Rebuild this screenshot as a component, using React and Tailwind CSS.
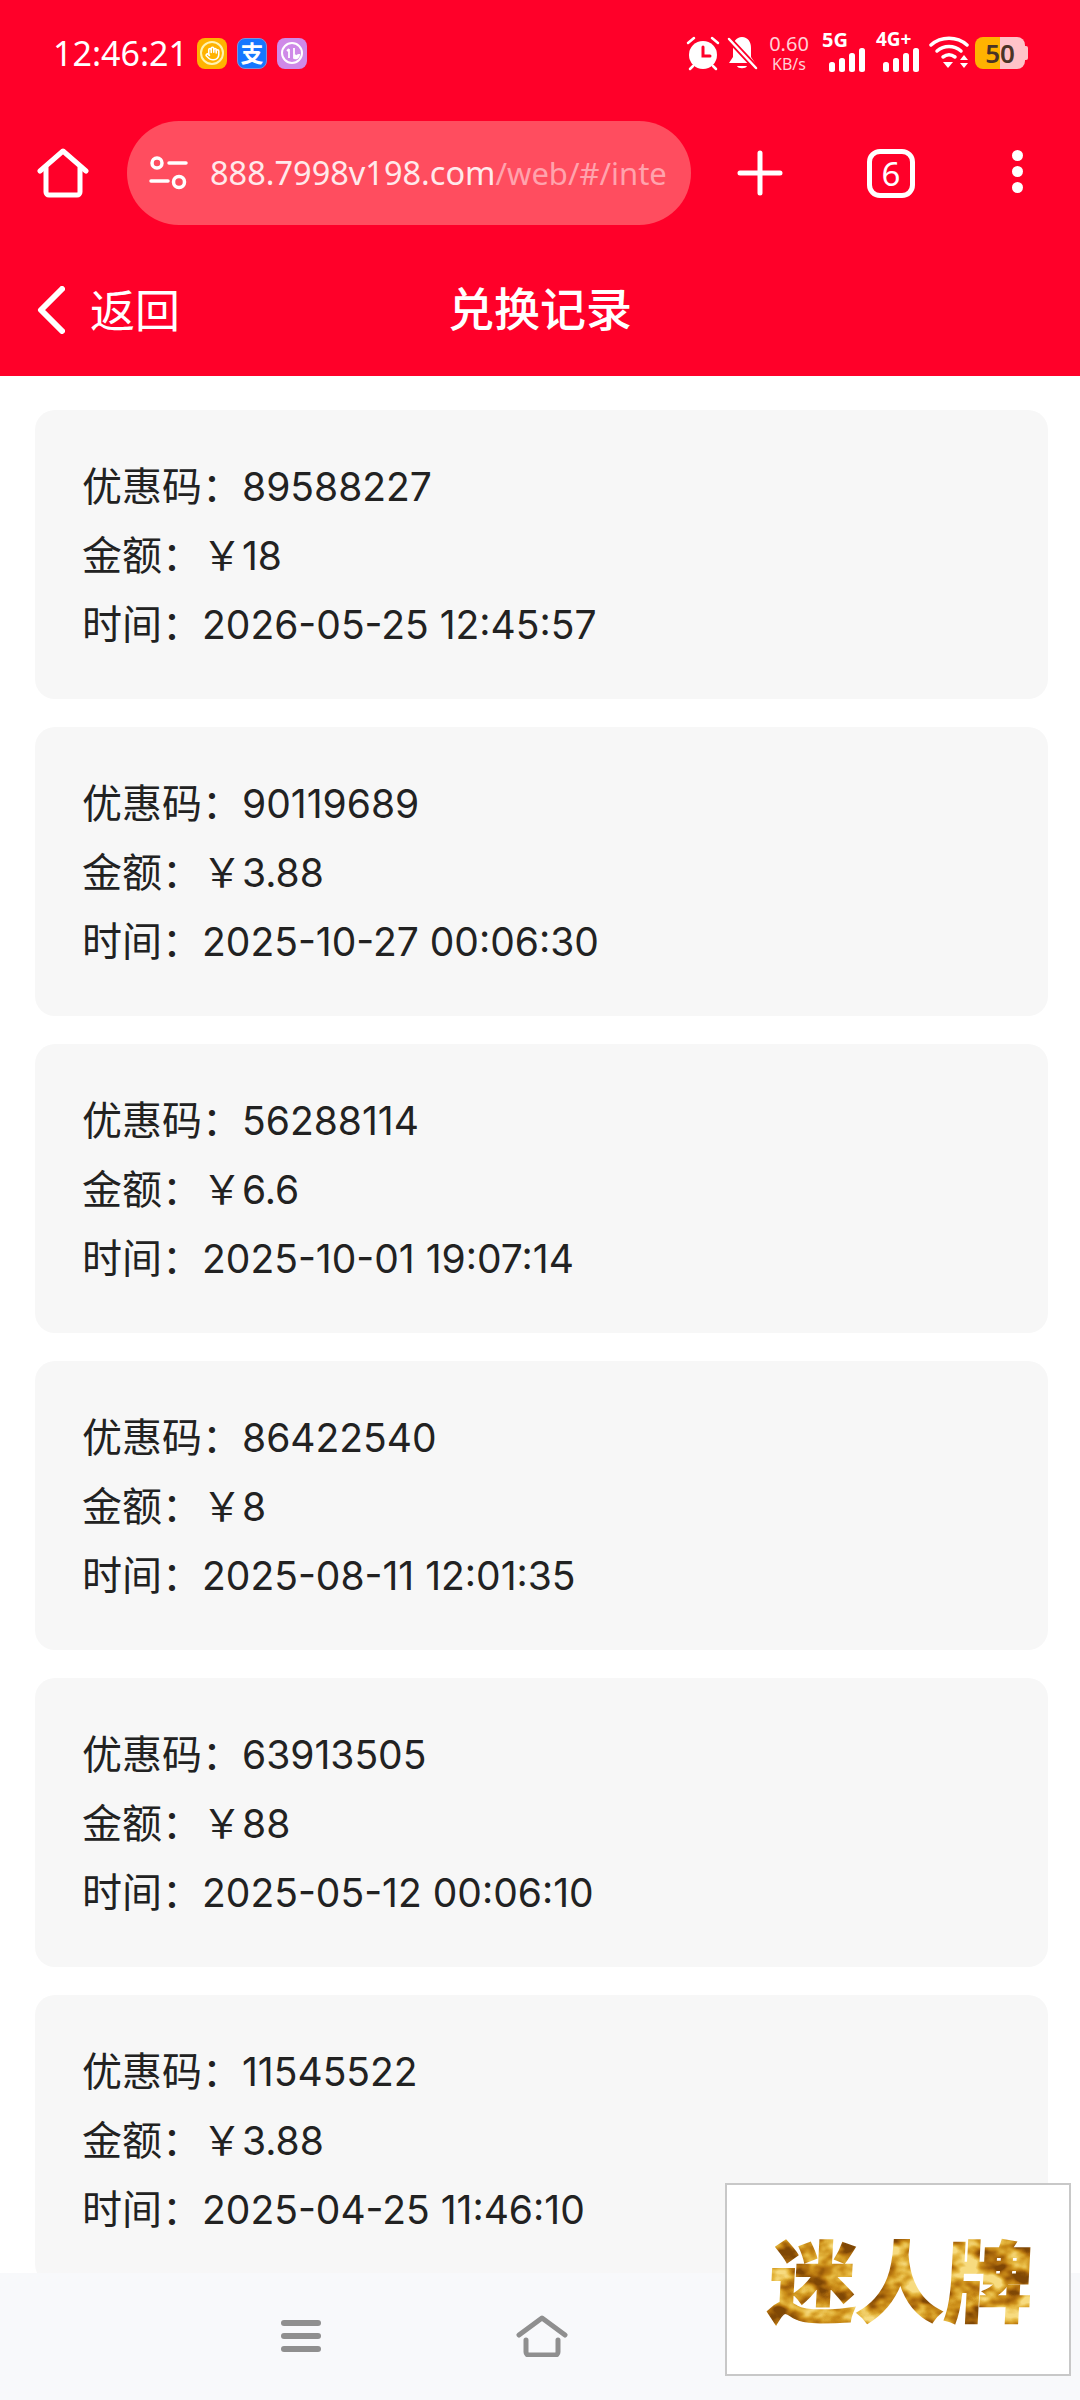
import React from "react";
import { Hand } from "lucide-react";

const records = [
  { code: "89588227", amount: "18", time: "2026-05-25 12:45:57" },
  { code: "90119689", amount: "3.88", time: "2025-10-27 00:06:30" },
  { code: "56288114", amount: "6.6", time: "2025-10-01 19:07:14" },
  { code: "86422540", amount: "8", time: "2025-08-11 12:01:35" },
  { code: "63913505", amount: "88", time: "2025-05-12 00:06:10" },
  { code: "11545522", amount: "3.88", time: "2025-04-25 11:46:10" },
];

const Signal = () => (
  <svg width="40" height="24" viewBox="0 0 40 24" fill="white">
    <rect x="2" y="14" width="6" height="10" rx="2.5" />
    <rect x="12" y="10" width="6" height="14" rx="2.5" />
    <rect x="22" y="5" width="6" height="19" rx="2.5" />
    <rect x="32" y="0" width="6" height="24" rx="2.5" />
  </svg>
);

const StatusBar = () => (
  <div className="h-[106px] flex items-center pl-[53px] pr-[52px]">
    <span className="text-[34px] leading-none text-white w-[144px] whitespace-nowrap">12:46:21</span>
    <div className="flex gap-[10px]">
      <div className="w-[30px] h-[31px] rounded-[8px] bg-[#ffb300] flex items-center justify-center">
        <div className="w-[24px] h-[24px] rounded-full border-2 border-[#fff3b0] flex items-center justify-center">
          <Hand size={15} color="#ffffff" strokeWidth={2.5} />
        </div>
      </div>
      <div className="w-[30px] h-[31px] rounded-[8px] bg-[#1677ff] border border-[#7f8fd8] flex items-center justify-center text-white text-[23px] leading-none font-bold">
        支
      </div>
      <div className="w-[30px] h-[31px] rounded-[8px] bg-[#cf8ae8] flex items-center justify-center">
        <svg width="24" height="24" viewBox="0 0 24 24" fill="none" stroke="white" strokeWidth="2">
          <circle cx="12" cy="12" r="10" />
          <path d="M9 8v9M7 10l2-2M14 7v9l2-2" strokeWidth="1.8" />
          <path d="M14 18c3 1 6-1 6-5-3 0-6 2-6 5z" fill="white" stroke="none" />
        </svg>
      </div>
    </div>
    <div className="ml-auto flex items-center">
      <svg width="36" height="36" viewBox="0 0 36 36" fill="white" stroke="white" strokeLinecap="round">
        <circle cx="18" cy="20" r="14" stroke="none" />
        <path d="M3 8l6-5M33 8l-6-5M8 31l-3 3M28 31l3 3" strokeWidth="2.5" fill="none" />
        <path d="M18 12v9h7" stroke="#ff0029" strokeWidth="3" fill="none" />
      </svg>
      <svg className="ml-[5px]" width="32" height="36" viewBox="0 0 32 36" fill="white" strokeLinecap="round">
        <path d="M16 2c6 0 9 5 9 11v9l4 6H3l4-6v-9C7 7 10 2 16 2z" />
        <path d="M11 31c1 3 9 3 10 0z" />
        <path d="M2 3l28 30" stroke="#ff0029" strokeWidth="6" />
        <path d="M3 4l27 29" stroke="white" strokeWidth="2.5" />
      </svg>
      <div className="ml-[9px] w-[44px] flex flex-col items-center text-[#ffd0d6] leading-none">
        <span className="text-[20px]">0.60</span>
        <span className="text-[16px] mt-[2px]">KB/s</span>
      </div>
      <div className="ml-[11px] w-[44px] relative h-[38px]">
        <span className="absolute left-0 top-[-4px] text-[20px] font-bold text-white leading-none">5G</span>
        <div className="absolute right-[-1px] bottom-0 flex"><Signal /></div>
      </div>
      <div className="ml-[10px] w-[44px] relative h-[38px]">
        <span className="absolute left-0 top-[-4px] text-[19px] font-bold text-white leading-none whitespace-nowrap">4G+</span>
        <div className="absolute right-[-1px] bottom-0 flex"><Signal /></div>
      </div>
      <svg className="ml-[9px]" width="40" height="34" viewBox="0 0 40 34" fill="none" stroke="white" strokeWidth="3.5" strokeLinecap="round">
        <path d="M2 9c10-9 26-9 36 0" />
        <path d="M8 15c7-6 17-6 24 0" />
        <path d="M14 21c4-3 8-3 12 0" />
        <path d="M14 26h10l-5 6z" fill="white" stroke="none" />
        <path d="M31 24l4-5 4 5zM31 27h8l-4 5z" fill="white" stroke="none" />
      </svg>
      <div className="ml-[6px] flex items-center">
        <div className="w-[50px] h-[32px] flex relative">
          <div className="w-[25px] bg-[#ffb300] rounded-l-[8px]" />
          <div className="w-[25px] bg-[#ffc2c8] rounded-r-[8px]" />
          <span className="absolute inset-0 flex items-center justify-center text-[26px] font-semibold leading-none text-[#4a3326]">50</span>
        </div>
        <div className="w-[3px] h-[14px] bg-[#ffc2c8] rounded-r-[2px]" />
      </div>
    </div>
  </div>
);

const BrowserBar = () => (
  <div className="h-[134px] flex items-center">
    <div className="w-[127px] flex justify-center pr-[2px]">
      <svg width="52" height="50" viewBox="0 0 52 50" fill="none" stroke="white" strokeWidth="5" strokeLinecap="round" strokeLinejoin="round">
        <path d="M3 23L26 3l23 20" />
        <path d="M9 20v24a3 3 0 0 0 3 3h28a3 3 0 0 0 3-3V20" />
      </svg>
    </div>
    <div className="w-[564px] h-[104px] rounded-full bg-[#ff4d5f] flex items-center pl-[21px] overflow-hidden">
      <svg width="40" height="34" viewBox="0 0 40 34" fill="none" stroke="white" strokeWidth="3.5" strokeLinecap="round">
        <circle cx="9" cy="7" r="5" />
        <path d="M21 7h17M3 25h17" />
        <circle cx="31" cy="26" r="5.5" />
      </svg>
      <span className="ml-[22px] text-[32.5px] leading-none whitespace-nowrap text-[#ffe9eb]">
        888.7998v198.com<span className="text-[31px] text-[#ffa3ad]">/web/#/inte</span>
      </span>
    </div>
    <div className="flex-1 relative h-full">
      <div className="absolute left-[46px] top-[44px]">
        <svg width="46" height="46" viewBox="0 0 46 46" stroke="white" strokeWidth="5" strokeLinecap="round">
          <path d="M23 3v40M3 23h40" />
        </svg>
      </div>
      <div className="absolute left-[176px] top-[43px] w-[48px] h-[49px] rounded-[13px] border-[5px] border-white flex items-center justify-center text-white text-[33px] leading-none">
        6
      </div>
      <div className="absolute left-[321px] top-[44px] flex flex-col gap-[5px]">
        <div className="w-[11px] h-[11px] rounded-full bg-white" />
        <div className="w-[11px] h-[11px] rounded-full bg-white" />
        <div className="w-[11px] h-[11px] rounded-full bg-white" />
      </div>
    </div>
  </div>
);

const TitleBar = () => (
  <div className="h-[136px] relative flex items-center justify-center pb-[1px] pl-[37px]">
    <div className="absolute left-[37px] top-[46px] flex items-center">
      <svg width="28" height="48" viewBox="0 0 28 48" fill="none" stroke="white" strokeWidth="6" strokeLinecap="round" strokeLinejoin="round">
        <path d="M25 3L4 24l21 21" />
      </svg>
      <span className="ml-[25px] text-[45px] leading-none text-white">返回</span>
    </div>
    <span className="text-[46px] leading-none font-medium text-white pr-[37px]">兑换记录</span>
  </div>
);

const Num = ({ children }) => (
  <span className="font-['Inter','Noto_Sans',sans-serif] text-[39px] leading-none">{children}</span>
);

const RecordCard = ({ code, amount, time }) => (
  <div className="shrink-0 rounded-[20px] bg-[#f7f7f7] pl-[47px] py-[41px] text-[40px] leading-[69px] text-[#222222]">
    <p>优惠码：<Num>{code}</Num></p>
    <p>金额：￥<Num>{amount}</Num></p>
    <p>时间：<Num>{time}</Num></p>
  </div>
);

const BottomNav = () => (
  <div className="h-[127px] shrink-0 bg-[#f8f9fb] flex items-center pl-[180px] pb-[2px]">
    <div className="w-[241px] flex justify-center">
      <div className="w-[40px] flex flex-col gap-[7px]">
        <div className="h-[6px] rounded-full bg-[#8f8f8f]" />
        <div className="h-[6px] rounded-full bg-[#8f8f8f]" />
        <div className="h-[6px] rounded-full bg-[#8f8f8f]" />
      </div>
    </div>
    <div className="w-[241px] flex justify-center">
      <svg width="52" height="42" viewBox="0 0 52 42" fill="none" stroke="#8f8f8f" strokeWidth="5" strokeLinecap="round" strokeLinejoin="round">
        <path d="M3 20L26 3l23 17" />
        <path d="M10 25v12a3 3 0 0 0 3 3h26a3 3 0 0 0 3-3V25" />
      </svg>
    </div>
  </div>
);

// gold logo: real text, marble texture comes from the filter
const GoldLogo = () => (
  <svg width="290" height="150" viewBox="0 0 290 150">
    <defs>
      <filter id="gold" x="0" y="0" width="100%" height="100%" colorInterpolationFilters="sRGB">
        <feTurbulence type="fractalNoise" baseFrequency="0.035 0.05" numOctaves="3" seed="7" result="noise" />
        <feColorMatrix in="noise" type="matrix" values="2.6 0 0 0 -0.8 2.6 0 0 0 -0.8 2.6 0 0 0 -0.8 0 0 0 0 1" result="grey" />
        <feComponentTransfer in="grey" result="tint">
          <feFuncR type="table" tableValues="0.5 0.68 0.8 0.9 0.97" />
          <feFuncG type="table" tableValues="0.28 0.42 0.56 0.72 0.86" />
          <feFuncB type="table" tableValues="0.02 0.05 0.1 0.25 0.5" />
        </feComponentTransfer>
        <feComposite in="tint" in2="SourceAlpha" operator="in" />
      </filter>
    </defs>
    <g filter="url(#gold)">
      <text
        x="20"
        y="110"
        fontSize="88"
        fontWeight="900"
        fontFamily="'Noto Sans CJK SC', sans-serif"
        transform="skewX(-3)"
        fill="#000"
        stroke="#000"
        strokeWidth="1.5"
      >
        迷人牌
      </text>
    </g>
  </svg>
);

export default function App() {
  return (
    <div className="relative w-[1080px] h-[2400px] bg-white flex flex-col overflow-hidden font-['Noto_Sans','Noto_Sans_CJK_SC',sans-serif]">
      <div className="shrink-0 bg-[#ff0029]">
        <StatusBar />
        <BrowserBar />
        <TitleBar />
      </div>
      <div className="flex-1 min-h-0 overflow-hidden flex flex-col gap-[28px] pt-[34px] pl-[35px] pr-[32px]">
        {records.map((r) => (
          <RecordCard key={r.code} {...r} />
        ))}
      </div>
      <BottomNav />
      <div className="absolute left-[725px] top-[2183px] w-[346px] h-[193px] bg-white border-2 border-[#c8c8c8] flex items-center justify-center">
        <GoldLogo />
      </div>
    </div>
  );
}
